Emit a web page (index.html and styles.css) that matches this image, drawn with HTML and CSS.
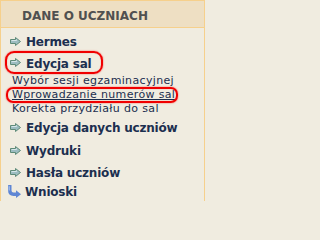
FILE: index.html
```html
<!DOCTYPE html>
<html lang="pl">
<head>
<meta charset="utf-8">
<title>Dane o uczniach</title>
<link rel="stylesheet" href="styles.css">
</head>
<body>
<div class="panel">
  <div class="head">DANE O UCZNIACH</div>
  <ul class="menu">
    <li class="item"><svg class="arrow" viewBox="0 0 11 9" width="11" height="9"><path d="M0.5 2.5 H5.5 V0.5 L10.5 4.5 L5.5 8.5 V6.5 H0.5 Z" fill="#9cbcc0" stroke="#5e8a78" stroke-width="1"/><path d="M1.5 3.5 H6.5 V2.5" fill="none" stroke="#d6e6ea" stroke-width="1"/></svg>Hermes</li>
    <li class="item edit"><svg class="arrow" viewBox="0 0 11 9" width="11" height="9"><path d="M0.5 2.5 H5.5 V0.5 L10.5 4.5 L5.5 8.5 V6.5 H0.5 Z" fill="#9cbcc0" stroke="#5e8a78" stroke-width="1"/><path d="M1.5 3.5 H6.5 V2.5" fill="none" stroke="#d6e6ea" stroke-width="1"/></svg>Edycja sal<span class="mark mark-edit"></span></li>
    <li class="sub">Wybór sesji egzaminacyjnej</li>
    <li class="sub"><a class="link" href="#">Wprowadzanie numerów sal</a><span class="mark mark-link"></span></li>
    <li class="sub">Korekta przydziału do sal</li>
    <li class="item gap"><svg class="arrow" viewBox="0 0 11 9" width="11" height="9"><path d="M0.5 2.5 H5.5 V0.5 L10.5 4.5 L5.5 8.5 V6.5 H0.5 Z" fill="#9cbcc0" stroke="#5e8a78" stroke-width="1"/><path d="M1.5 3.5 H6.5 V2.5" fill="none" stroke="#d6e6ea" stroke-width="1"/></svg>Edycja danych uczniów</li>
    <li class="item"><svg class="arrow" viewBox="0 0 11 9" width="11" height="9"><path d="M0.5 2.5 H5.5 V0.5 L10.5 4.5 L5.5 8.5 V6.5 H0.5 Z" fill="#9cbcc0" stroke="#5e8a78" stroke-width="1"/><path d="M1.5 3.5 H6.5 V2.5" fill="none" stroke="#d6e6ea" stroke-width="1"/></svg>Wydruki</li>
    <li class="item"><svg class="arrow" viewBox="0 0 11 9" width="11" height="9"><path d="M0.5 2.5 H5.5 V0.5 L10.5 4.5 L5.5 8.5 V6.5 H0.5 Z" fill="#9cbcc0" stroke="#5e8a78" stroke-width="1"/><path d="M1.5 3.5 H6.5 V2.5" fill="none" stroke="#d6e6ea" stroke-width="1"/></svg>Hasła uczniów</li>
    <li class="item last"><svg class="turn" viewBox="0 0 15 13" width="15" height="13"><path d="M2.8 0.8 V5.5 Q2.8 9.2 6.5 9.2 H9.5" fill="none" stroke="#5f86d4" stroke-width="3.4" stroke-linecap="round"/><path d="M2.2 1.2 V5.5" fill="none" stroke="#b3c8f0" stroke-width="1"/><path d="M9 5.2 L14 9.2 L9 13 Z" fill="#5f86d4"/></svg>Wnioski</li>
  </ul>
</div>
</body>
</html>
```
FILE: styles.css
```css
html, body {
  margin: 0;
  padding: 0;
  background: #f0ece0;
}

.panel {
  width: 205px;
  height: 201px;
  box-sizing: border-box;
  border: 1px solid #f6d08c;
  border-bottom: none;
  background: #f0ece0;
  font-family: "DejaVu Sans", Verdana, sans-serif;
  color: #1c2f4f;
}

.head {
  height: 27px;
  box-sizing: border-box;
  background: #eedfc3;
  border-bottom: 1px solid #f6d08c;
  padding: 8px 0 0 21px;
  font-size: 12px;
  line-height: 14px;
  font-weight: bold;
  color: #505050;
}

.menu {
  list-style: none;
  margin: 0;
  padding: 3px 0 0 0;
}

.item {
  position: relative;
  display: flex;
  align-items: center;
  height: 22px;
  padding-left: 9px;
  font-size: 12px;
  font-weight: bold;
  letter-spacing: -0.2px;
}

.item.edit {
  height: 21px;
}

.item.gap {
  height: 24px;
}

.item.last {
  height: 16px;
  padding-left: 6px;
}

.arrow {
  display: block;
  margin: -2px 5px 0 0;
  flex: none;
}

.turn {
  display: block;
  margin: -2px 3px 0 0;
  flex: none;
}

.sub {
  position: relative;
  height: 14px;
  line-height: 14px;
  padding-left: 11px;
  font-size: 11px;
  letter-spacing: 0.35px;
}

.link {
  color: #1c2f4f;
  text-decoration: underline;
}

.mark {
  position: absolute;
  box-sizing: border-box;
  border: 2px solid #f00000;
  border-radius: 9px;
  box-shadow: 0 0 1.5px rgba(255, 0, 0, 0.8), inset 0 0 1px rgba(255, 0, 0, 0.6);
}

.mark-edit {
  left: 4px;
  top: -2px;
  width: 98px;
  height: 23px;
}

.mark-link {
  left: 5px;
  top: -1px;
  width: 172px;
  height: 16px;
  border-radius: 7px;
}
```
